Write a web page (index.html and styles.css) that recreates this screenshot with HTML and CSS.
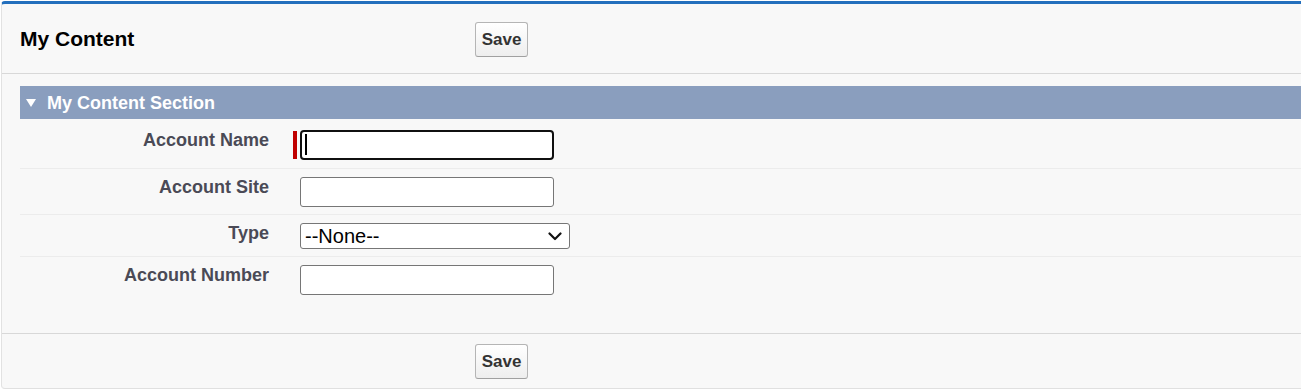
FILE: index.html
```html
<!DOCTYPE html>
<html lang="en">
<head>
<meta charset="utf-8">
<title>My Content</title>
<link rel="stylesheet" href="styles.css">
</head>
<body>
<div class="page-block">
  <div class="pb-header">
    <h2 class="pb-title">My Content</h2>
    <div class="pb-buttons"><button class="btn" type="button">Save</button></div>
  </div>
  <div class="pb-body">
    <div class="pb-subheader">
      <span class="twisty"></span>
      <h3 class="subheader-title">My Content Section</h3>
    </div>
    <div class="field-row field-row-first">
      <label class="label-col" for="acc-name">Account Name</label>
      <div class="data-col">
        <span class="required-bar"></span>
        <span class="input-wrap">
          <input id="acc-name" class="text-input text-input-focused" type="text">
          <span class="caret"></span>
        </span>
      </div>
    </div>
    <div class="field-row">
      <label class="label-col" for="acc-site">Account Site</label>
      <div class="data-col"><input id="acc-site" class="text-input" type="text"></div>
    </div>
    <div class="field-row">
      <label class="label-col" for="acc-type">Type</label>
      <div class="data-col">
        <span class="select-wrap">
          <select id="acc-type" class="select-input">
            <option>--None--</option>
          </select>
          <svg class="select-arrow" width="14" height="9" viewBox="0 0 14 9" aria-hidden="true">
            <path d="M1.5 1.5 L7 7 L12.5 1.5" fill="none" stroke="#111" stroke-width="2.2" stroke-linecap="round" stroke-linejoin="round"/>
          </svg>
        </span>
      </div>
    </div>
    <div class="field-row field-row-last">
      <label class="label-col" for="acc-num">Account Number</label>
      <div class="data-col"><input id="acc-num" class="text-input" type="text"></div>
    </div>
  </div>
  <div class="pb-footer">
    <div class="pb-title-spacer"></div>
    <div class="pb-buttons"><button class="btn" type="button">Save</button></div>
  </div>
</div>
</body>
</html>
```

FILE: styles.css
```css
html, body {
  margin: 0;
  padding: 0;
  background: #ffffff;
  overflow: hidden;
}

body {
  font-family: "Liberation Sans", Arial, sans-serif;
  color: #000;
}

.page-block {
  margin: 1px 0 0 1px;
  width: 1330px;
  background: #f8f8f8;
  border-top: 3px solid #236fbd;
  border-left: 1px solid #e2e2e2;
  border-bottom: 1px solid #e0e0e0;
  border-radius: 4px;
}

.pb-header,
.pb-footer {
  display: flex;
  align-items: center;
}

.pb-header {
  padding: 18px 0 16px;
  border-bottom: 1px solid #d8d8d8;
}

.pb-footer {
  padding: 10px 0 9px;
  border-top: 1px solid #d8d8d8;
}

.pb-title,
.pb-title-spacer {
  flex: 0 0 473px;
  box-sizing: border-box;
  margin: 0;
  padding: 0 0 2px 18px;
  font-size: 21px;
  font-weight: bold;
  color: #000;
}

.btn {
  box-sizing: border-box;
  width: 53px;
  height: 35px;
  padding: 0;
  font-family: "Liberation Sans", Arial, sans-serif;
  font-size: 17px;
  font-weight: bold;
  color: #333;
  background: linear-gradient(#ffffff, #eeeeee);
  border: 1px solid #b5b5b5;
  border-bottom-color: #a0a0a0;
  border-radius: 3px;
}

.pb-body {
  padding: 12px 0 31px 18px;
}

.pb-subheader {
  display: flex;
  align-items: center;
  height: 33px;
  padding-left: 6px;
  background: #8a9ebe;
}

.twisty {
  width: 0;
  height: 0;
  border-left: 5px solid transparent;
  border-right: 5px solid transparent;
  border-top: 8px solid #ffffff;
  margin: 1px 11px 0 0;
}

.subheader-title {
  margin: 2px 0 0;
  font-size: 18px;
  font-weight: bold;
  color: #ffffff;
}

.field-row {
  display: grid;
  grid-template-columns: 261px 1fr;
  padding: 8px 0 7px;
  border-bottom: 1px solid #ececec;
}

.field-row-first {
  padding: 11px 0 8px;
}

.field-row-last {
  border-bottom: none;
}

.label-col {
  box-sizing: border-box;
  padding-right: 12px;
  text-align: right;
  font-size: 18px;
  line-height: 21px;
  font-weight: bold;
  color: #4a4a56;
}

.data-col {
  display: flex;
  align-items: flex-start;
  padding-left: 19px;
}

.required-bar {
  flex: 0 0 4px;
  height: 28px;
  margin: 1px 3px 0 -7px;
  background: #c00000;
}

.input-wrap,
.select-wrap {
  position: relative;
  display: block;
}

.text-input {
  display: block;
  box-sizing: border-box;
  width: 254px;
  height: 30px;
  margin: 0;
  padding: 0 4px;
  font-family: "Liberation Sans", Arial, sans-serif;
  font-size: 20px;
  background: #ffffff;
  border: 1px solid #767676;
  border-radius: 3px;
}

.text-input-focused {
  border: 2px solid #101010;
  border-radius: 4px;
  outline: none;
}

.caret {
  position: absolute;
  left: 5px;
  top: 4px;
  width: 2px;
  height: 21px;
  background: #000;
}

.select-input {
  display: block;
  box-sizing: border-box;
  width: 270px;
  height: 26px;
  margin: 0;
  padding: 0 30px 0 4px;
  font-family: "Liberation Sans", Arial, sans-serif;
  font-size: 20px;
  color: #000;
  background: #ffffff;
  border: 1px solid #767676;
  border-radius: 3px;
  -webkit-appearance: none;
  appearance: none;
}

.select-arrow {
  position: absolute;
  right: 8px;
  top: 9px;
  pointer-events: none;
}
```
